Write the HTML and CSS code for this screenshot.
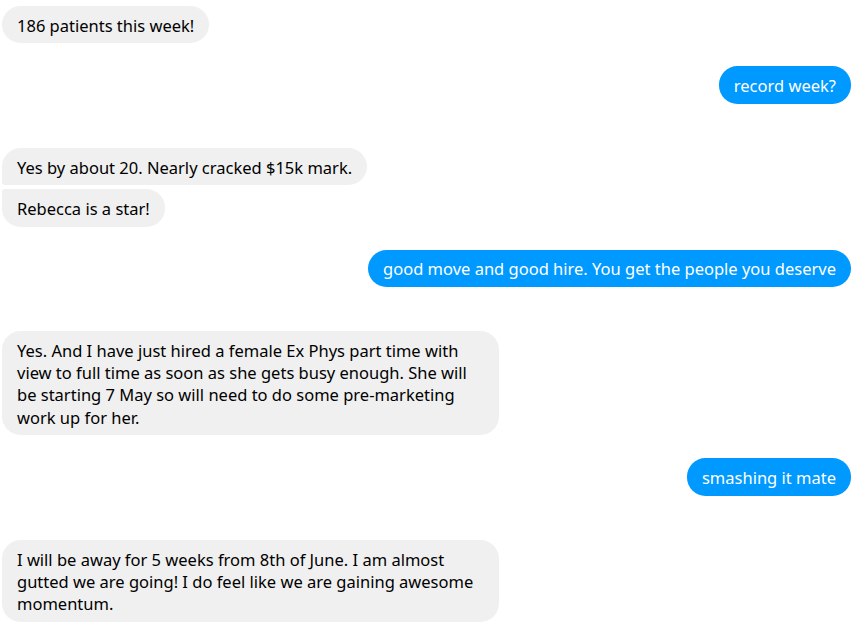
FILE: index.html
```html
<!DOCTYPE html>
<html>
<head>
<meta charset="utf-8">
<link rel="stylesheet" href="styles.css">
</head>
<body>
<div class="chat">
  <div class="row in"><div class="bubble">186 patients this week!</div></div>
  <div class="row out gap-s"><div class="bubble">record week?</div></div>
  <div class="group in gap-l">
    <div class="bubble first">Yes by about 20. Nearly cracked $15k mark.</div>
    <div class="bubble last">Rebecca is a star!</div>
  </div>
  <div class="row out gap-s"><div class="bubble">good move and good hire. You get the people you deserve</div></div>
  <div class="row in gap-l"><div class="bubble">Yes. And I have just hired a female Ex Phys part time with view to full time as soon as she gets busy enough. She will be starting 7 May so will need to do some pre-marketing work up for her.</div></div>
  <div class="row out gap-s"><div class="bubble">smashing it mate</div></div>
  <div class="row in gap-l"><div class="bubble">I will be away for 5 weeks from 8th of June. I am almost gutted we are going! I do feel like we are gaining awesome momentum.</div></div>
</div>
</body>
</html>
```

FILE: styles.css
```css
html, body {
  margin: 0;
  padding: 0;
  background: #ffffff;
}
body {
  font-family: "Segoe UI", "Noto Sans", "Open Sans", sans-serif;
  font-size: 16.5px;
  line-height: 22.25px;
  color: #000000;
}
.chat {
  display: flex;
  flex-direction: column;
  padding: 6px 15px 0 2px;
}
.row, .group {
  display: flex;
  flex-direction: column;
}
.in { align-items: flex-start; }
.out { align-items: flex-end; }
.group { gap: 4px; }
.gap-s { margin-top: 23px; }
.gap-l { margin-top: 44.5px; }
.bubble {
  max-width: 467px;
  padding: 8.5px 15px 6.5px;
  border-radius: 18.5px;
  background: #f0f0f0;
}
.out .bubble {
  background: #0099ff;
  color: #ffffff;
}
.bubble.first { border-bottom-left-radius: 3px; }
.bubble.last { border-top-left-radius: 3px; }
```
